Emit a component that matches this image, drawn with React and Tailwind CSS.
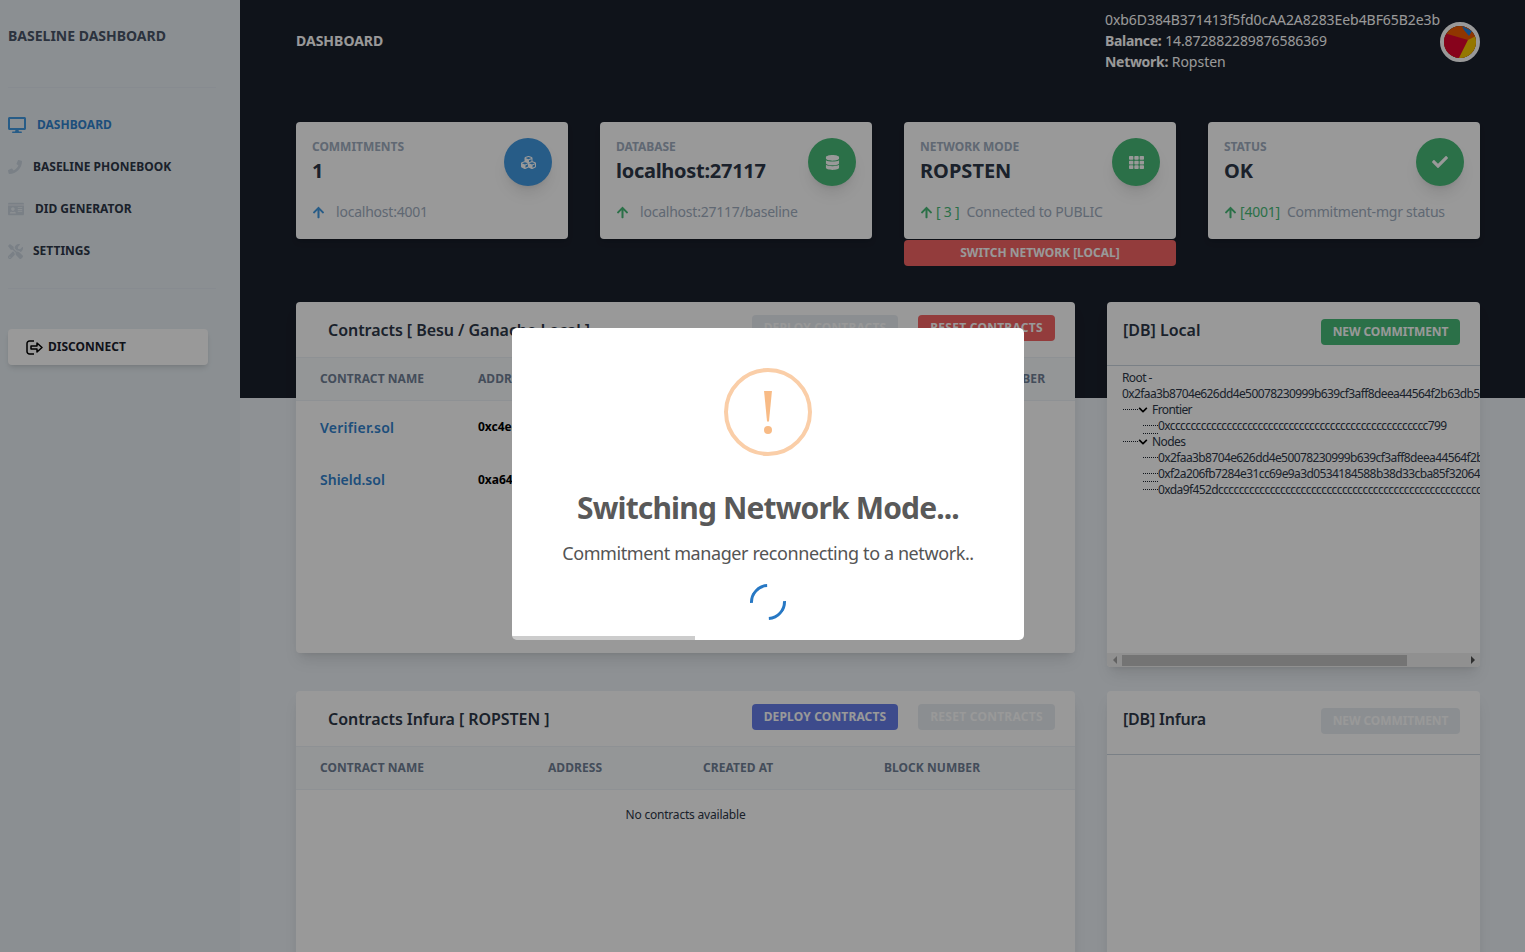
import React from "react";
import { FaDesktop, FaPhone, FaIdCard, FaTools, FaCubes, FaDatabase, FaTh, FaCheck, FaArrowUp, FaChevronDown } from "react-icons/fa";

const nav = [
  { icon: FaDesktop, size: 18, label: "DASHBOARD", active: true, gap: "gap-[11px]" },
  { icon: FaPhone, size: 14, label: "BASELINE PHONEBOOK", gap: "gap-[11px]" },
  { icon: FaIdCard, size: 16, label: "DID GENERATOR", gap: "gap-[11px]" },
  { icon: FaTools, size: 15, label: "SETTINGS", gap: "gap-[10px]" },
];

function Stat({ label, value, valueClass = "", Icon, iconSize = 15, circle, arrow, bracket, sub }) {
  return (
    <div className="h-[117px] bg-white rounded-[4px] p-4 flex flex-col shadow-md">
      <div className="flex justify-between">
        <div>
          <div className="text-[12px] leading-4 font-bold text-[#a0aec0] uppercase tracking-[-0.05px] translate-y-px">{label}</div>
          <div className={`mt-[3px] text-[20px] leading-7 font-bold text-[#2d3748] ${valueClass}`}>{value}</div>
        </div>
        <div className={`w-12 h-12 rounded-full flex items-center justify-center text-white shadow-lg ${circle}`}>
          <Icon size={iconSize} />
        </div>
      </div>
      <div className="mt-auto flex items-center text-[14px] leading-5 tracking-[-0.22px] -translate-y-[1px]">
        <FaArrowUp size={13} className={arrow} />
        {bracket && <span className="ml-[3px] text-[#48bb78]">{bracket}</span>}
        <span className={`${bracket ? "ml-[7px]" : "ml-[11px]"} text-[#a0aec0]`}>{sub}</span>
      </div>
    </div>
  );
}

function Btn({ children, className }) {
  return (
    <div className={`h-[26px] rounded-[4px] text-[12px] font-bold flex items-center justify-center text-white ${className}`}>
      {children}
    </div>
  );
}

function ContractsCard({ title, deployClass, resetClass, cols, children, className }) {
  return (
    <div className={`bg-white rounded-[4px] shadow-lg overflow-hidden ${className}`}>
      <div className="h-[55px] flex pl-8 pr-5 pt-[13px]">
        <div className="text-[16px] leading-[30px] font-semibold tracking-[-0.05px] text-[#2d3748]">{title}</div>
        <Btn className={`ml-auto w-[146px] tracking-[0.15px] ${deployClass}`}>DEPLOY CONTRACTS</Btn>
        <Btn className={`ml-5 w-[137px] tracking-[0.25px] ${resetClass}`}>RESET CONTRACTS</Btn>
      </div>
      <div className="h-[44px] pb-[1px] bg-[#f7fafc] border-y border-[#edf2f7] flex items-center pl-6 text-[12px] font-bold tracking-[0.05px] text-[#718096]">
        {cols.map((c) => (
          <div key={c.t} style={{ width: c.w }}>{c.t}</div>
        ))}
      </div>
      {children}
    </div>
  );
}

function Dots({ w, under }) {
  return (
    <span className={`block h-4 shrink-0 border-dotted border-[#1a202c] ${under ? "border-b" : ""}`} style={{ width: w }}>
      <span className="block h-2 border-b border-dotted border-[#1a202c]" />
    </span>
  );
}

function TreeBranch({ label }) {
  return (
    <div className="flex items-start h-4 pl-px">
      <Dots w={15} />
      <FaChevronDown size={10} className="text-black mt-[3px]" />
      <span className="ml-[4px]">{label}</span>
    </div>
  );
}

function TreeLeaf({ text, under }) {
  return (
    <div className="flex h-4 pl-[21px]">
      <Dots w={15} under={under} />
      <span className="whitespace-nowrap">{text}</span>
    </div>
  );
}

function Avatar() {
  return (
    <div className="w-10 h-10 rounded-full border-4 border-white overflow-hidden shrink-0 mt-[22px]">
      <svg viewBox="0 0 32 32" className="w-full h-full block">
        <rect width="32" height="32" fill="#f15b00" />
        <path d="M0 7 L24 14 L15 32 L0 32Z" fill="#e2062f" />
        <path d="M24 14 L32 10 L32 32 L15 32Z" fill="#f7c600" />
        <path d="M18 0 L28 5 L25 10 L20 4Z" fill="#1f7fdc" />
      </svg>
    </div>
  );
}

function DisconnectIcon() {
  return (
    <svg width="17" height="15" viewBox="0 0 17 15" fill="none" stroke="#000" strokeWidth="1.5" className="shrink-0">
      <path d="M8 1H3.5a2.5 2.5 0 0 0-2.5 2.5v8A2.5 2.5 0 0 0 3.5 14H8" />
      <path d="M5 6h6V3l5 4.5-5 4.5V9H5z" strokeLinejoin="round" />
    </svg>
  );
}

export default function App() {
  return (
    <div className="relative h-[952px] w-[1525px] overflow-hidden flex bg-[#edf2f7] font-['Noto_Sans',sans-serif]">
      <aside className="w-[240px] shrink-0 bg-[#e8eff4] px-2 flex flex-col">
        <div className="h-[88px] w-[208px] border-b border-[#e2e8f0] pt-[26px] text-[14px] leading-5 font-bold text-[#4a5568] whitespace-nowrap">
          BASELINE DASHBOARD
        </div>
        <nav className="pt-4 h-[201px] w-[208px] border-b border-[#e2e8f0]">
          {nav.map((n) => (
            <div key={n.label} className={`h-[42px] flex items-center ${n.gap} text-[12px] font-bold whitespace-nowrap ${n.active ? "text-[#3182ce] pl-0" : "text-[#2d3748]"}`}>
              <n.icon size={n.size} className={n.active ? "text-[#4299e1]" : "text-[#cbd5e0]"} />
              <span>{n.label}</span>
            </div>
          ))}
        </nav>
        <div className="mt-[40px] w-[200px] h-9 rounded-[4px] bg-white shadow-md flex items-center pl-[18px] gap-[5px] text-[12px] font-bold text-[#1a202c]">
          <DisconnectIcon />
          DISCONNECT
        </div>
      </aside>

      <main className="flex-1 min-w-0 pl-14 pr-[45px] bg-[linear-gradient(#1a202c_398px,#edf2f7_398px)]">
        <header className="h-[122px] flex">
          <div className="pt-[31px] text-[14px] leading-5 font-bold text-white">DASHBOARD</div>
          <div className="ml-auto flex">
            <div className="pt-[9px] w-[335px] text-[14px] leading-[21px] text-white whitespace-nowrap">
              <div className="tracking-[-0.06px]">0xb6D384B371413f5fd0cAA2A8283Eeb4BF65B2e3b</div>
              <div><b className="tracking-[-0.3px]">Balance:</b> <span className="tracking-[-0.1px]">14.872882289876586369</span></div>
              <div><b className="tracking-[-0.3px]">Network:</b> Ropsten</div>
            </div>
            <Avatar />
          </div>
        </header>

        <section className="grid grid-cols-4 gap-8 h-[144px] items-start">
          <Stat label="Commitments" value="1" Icon={FaCubes} circle="bg-[#4299e1]" arrow="text-[#4299e1]" sub="localhost:4001" />
          <Stat label="Database" value="localhost:27117" valueClass="tracking-[-0.27px]" Icon={FaDatabase} circle="bg-[#48bb78]" arrow="text-[#48bb78]" sub="localhost:27117/baseline" />
          <div className="flex flex-col gap-px">
            <Stat label="Network Mode" value="ROPSTEN" Icon={FaTh} circle="bg-[#48bb78]" arrow="text-[#48bb78]" bracket="[ 3 ]" sub="Connected to PUBLIC" />
            <Btn className="bg-[#f56565]">SWITCH NETWORK [LOCAL]</Btn>
          </div>
          <Stat label="Status" value="OK" Icon={FaCheck} iconSize={16} circle="bg-[#48bb78]" arrow="text-[#48bb78]" bracket="[4001]" sub="Commitment-mgr status" />
        </section>

        <section className="mt-9 flex gap-8 items-start">
          <div className="w-[779px] flex flex-col gap-[38px]">
            <ContractsCard
              className="h-[351px]"
              title="Contracts [ Besu / Ganache Local ]"
              deployClass="bg-[#e8edf2]"
              resetClass="bg-[#f56565]"
              cols={[
                { t: "CONTRACT NAME", w: 158 },
                { t: "ADDRESS", w: 471 },
                { t: "BLOCK NUMBER", w: 120 },
              ]}
            >
              <div className="flex h-[52px] items-center pl-6 text-[12px] font-bold text-black">
                <span className="w-[158px] text-[14px] font-semibold tracking-[0.25px] text-[#3182ce] [font-variant-ligatures:none]">Verifier.sol</span>
                <span>0xc4e8a1f20b7d</span>
              </div>
              <div className="flex h-[53px] items-center pl-6 text-[12px] font-bold text-black">
                <span className="w-[158px] text-[14px] font-semibold text-[#3182ce]">Shield.sol</span>
                <span>0xa64f7c3e90d1</span>
              </div>
            </ContractsCard>
            <ContractsCard
              className="h-[300px]"
              title="Contracts Infura [ ROPSTEN ]"
              deployClass="bg-[#667eea]"
              resetClass="bg-[#e8edf2]"
              cols={[
                { t: "CONTRACT NAME", w: 228 },
                { t: "ADDRESS", w: 155 },
                { t: "CREATED AT", w: 181 },
                { t: "BLOCK NUMBER", w: 120 },
              ]}
            >
              <div className="pt-[17px] text-center text-[12px] leading-4 tracking-[-0.2px] text-[#2d3748]">No contracts available</div>
            </ContractsCard>
          </div>

          <div className="w-[373px] flex flex-col gap-6">
            <div className="h-[365px] bg-white rounded-[4px] shadow-lg overflow-hidden flex flex-col">
              <div className="h-[64px] shrink-0 border-b border-[#cbd5e0] flex pl-4 pr-5 pt-[16px]">
                <div className="text-[16px] leading-6 font-semibold text-[#2d3748]">[DB] Local</div>
                <Btn className="ml-auto w-[139px] mt-px tracking-[-0.1px] bg-[#48bb78]">NEW COMMITMENT</Btn>
              </div>
              <div className="flex-1 pl-[15px] pt-[4px] text-[12px] leading-4 tracking-[-0.6px] text-[#2d3748] overflow-hidden whitespace-nowrap">
                <div>Root -</div>
                <div>0x2faa3b8704e626dd4e50078230999b639cf3aff8deea44564f2b63db5c2f</div>
                <TreeBranch label="Frontier" />
                <TreeLeaf under text="0xcccccccccccccccccccccccccccccccccccccccccccccccccc799" />
                <TreeBranch label="Nodes" />
                <TreeLeaf text="0x2faa3b8704e626dd4e50078230999b639cf3aff8deea44564f2b63db5c2f" />
                <TreeLeaf under text="0xf2a206fb7284e31cc69e9a3d0534184588b38d33cba85f32064c9ab1" />
                <TreeLeaf text="0xda9f452dcccccccccccccccccccccccccccccccccccccccccccccccccccccccc" />
              </div>
              <div className="h-[14px] shrink-0 bg-[#f1f1f1] flex items-center">
                <span className="w-[15px] flex justify-center">
                  <span className="border-y-[4px] border-r-[4px] border-y-transparent border-r-[#a3a3a3]" />
                </span>
                <div className="w-[285px] h-[11px] bg-[#c1c1c1]" />
                <span className="ml-auto w-[15px] flex justify-center">
                  <span className="border-y-[4px] border-l-[4px] border-y-transparent border-l-[#505050]" />
                </span>
              </div>
            </div>
            <div className="h-[300px] bg-white rounded-[4px] shadow-lg">
              <div className="h-[64px] border-b border-[#cbd5e0] flex pl-4 pr-5 pt-[16px]">
                <div className="text-[16px] leading-6 font-semibold tracking-[-0.2px] text-[#2d3748]">[DB] Infura</div>
                <Btn className="ml-auto w-[139px] mt-px tracking-[-0.1px] bg-[#e8edf2]">NEW COMMITMENT</Btn>
              </div>
            </div>
          </div>
        </section>
      </main>

      <div className="absolute inset-0 bg-black/40 flex justify-center items-center pt-4 pl-[11px]">
        <div className="relative w-[512px] h-[312px] bg-white rounded-[5px] overflow-hidden flex flex-col items-center pt-10">
          <div className="w-[88px] h-[88px] rounded-full border-4 border-[#facea8] flex flex-col items-center justify-center shrink-0">
            <div className="w-[8px] h-[31px] bg-[#f8bb86]" style={{ clipPath: "polygon(0 0,100% 0,62% 100%,38% 100%)" }} />
            <div className="w-[8px] h-[8px] rounded-full bg-[#f8bb86] mt-[4px]" />
          </div>
          <div className="mt-[32px] text-[30px] leading-[40px] font-bold tracking-[-0.85px] text-[#595959] whitespace-nowrap">Switching Network Mode...</div>
          <div className="mt-[12px] text-[18px] leading-[26px] tracking-[-0.4px] text-[#545454] whitespace-nowrap">Commitment manager reconnecting to a network..</div>
          <div className="mt-[18px] w-9 h-9 rounded-full border-[3.5px] border-y-[#2778c4] border-x-transparent rotate-[-48deg]" />
          <div className="absolute left-0 bottom-0 w-[183px] h-1 bg-black/20" />
        </div>
      </div>
    </div>
  );
}
